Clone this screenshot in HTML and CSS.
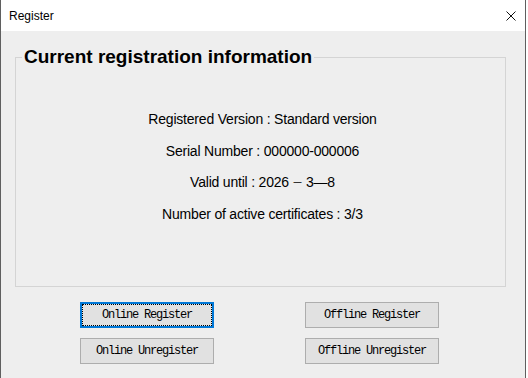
FILE: index.html
```html
<!DOCTYPE html>
<html lang="en">

<head>
  <meta charset="UTF-8" />
  <title>Register</title>
  <link rel="stylesheet" href="styles.css">
</head>

<body>
  <div class="window" role="dialog" aria-label="Register">
    <header class="titlebar">
      <span class="title">Register</span>
      <button type="button" class="close-btn" aria-label="Close">
        <svg width="10" height="10" viewBox="0 0 10 10" aria-hidden="true">
          <path d="M0.5 0.5 L9.5 9.5 M9.5 0.5 L0.5 9.5" stroke="#111" stroke-width="1" fill="none" />
        </svg>
      </button>
    </header>

    <main class="content">
      <fieldset class="group">
        <legend>Current registration information</legend>
        <ul class="info">
          <li>Registered Version : Standard version</li>
          <li>Serial Number : 000000-000006</li>
          <li>Valid until : 2026<span class="wide">－</span>3—8</li>
          <li>Number of active certificates : 3/3</li>
        </ul>
      </fieldset>

      <div class="actions">
        <button type="button" class="btn is-focused">Online Register</button>
        <button type="button" class="btn">Offline Register</button>
        <button type="button" class="btn">Online Unregister</button>
        <button type="button" class="btn">Offline Unregister</button>
      </div>
    </main>
  </div>
</body>

</html>
```

FILE: styles.css
```css
:root {
  --color-face: #eeeeee;
  --color-frame: #5f5f5f;
  --color-group-line: #d4d4d4;
  --color-btn: #e1e1e1;
  --color-btn-border: #adadad;
  --color-focus: #0078d7;
  --font-ui: "Liberation Sans", Arial, "Noto Sans CJK SC", sans-serif;
  --font-btn: "Liberation Mono", "Courier New", monospace;
}

*,
*::before,
*::after {
  box-sizing: border-box;
}

body {
  margin: 0;
  background: #ffffff;
  font-family: var(--font-ui);
  color: #000;
  width: 528px;
  height: 378px;
  overflow: hidden;
}

.window {
  width: 526px;
  height: 378px;
  border-left: 1px solid var(--color-frame);
  border-right: 1px solid var(--color-frame);
  background: var(--color-face);
  display: flex;
  flex-direction: column;
}

.titlebar {
  height: 31px;
  background: #ffffff;
  display: flex;
  align-items: center;
  justify-content: space-between;
  padding: 0 0 0 8px;
}

.title {
  font-size: 12px;
  margin-top: 1px;
}

.close-btn {
  width: 29px;
  height: 31px;
  border: none;
  background: transparent;
  padding: 0;
  display: flex;
  align-items: center;
  justify-content: center;
}

.content {
  padding: 15px 0 0 14px;
}

.group {
  width: 491px;
  height: 241px;
  margin: 0;
  padding: 0 0 0 4px;
  border: 1px solid var(--color-group-line);
}

.group legend {
  font-size: 19px;
  font-weight: 700;
  padding: 0 2px;
  margin-left: 2px;
  line-height: 22px;
}

.info {
  list-style: none;
  margin: 0;
  padding: 43px 0 0;
  display: flex;
  flex-direction: column;
  align-items: center;
  gap: 15.7px;
  font-size: 14px;
  letter-spacing: -0.2px;
}

.info li {
  line-height: 16px;
}

.info .wide {
  font-family: "Noto Sans CJK SC", sans-serif;
  font-size: 11px;
  letter-spacing: 0;
  margin: 0 3px;
}

.actions {
  display: grid;
  grid-template-columns: 134px 134px;
  column-gap: 91px;
  row-gap: 10px;
  padding: 15px 0 0 65px;
}

.btn {
  height: 26px;
  margin: 0;
  padding: 0;
  background: var(--color-btn);
  border: 1px solid var(--color-btn-border);
  font-family: var(--font-btn);
  font-size: 12px;
  letter-spacing: -1.2px;
  color: #000;
}

.btn.is-focused {
  border: 2px solid var(--color-focus);
  outline: 1px dotted #000;
  outline-offset: -3px;
}
```
